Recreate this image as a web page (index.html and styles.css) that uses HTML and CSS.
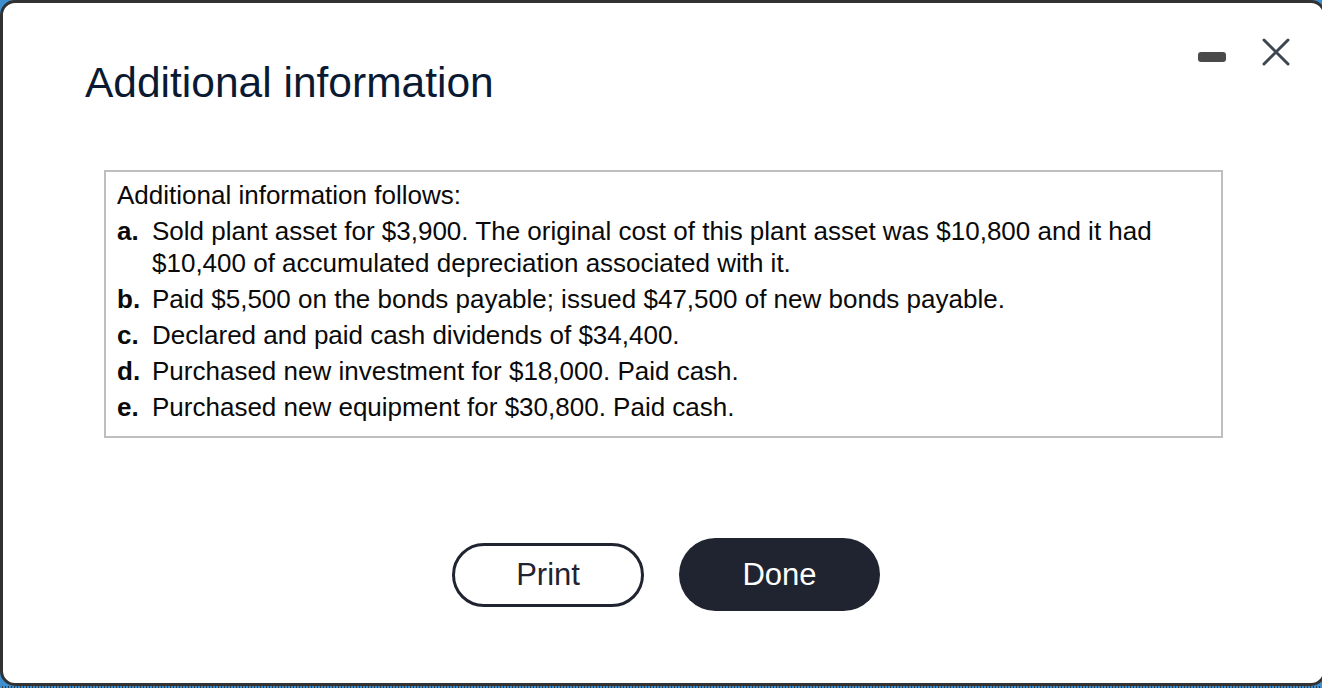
FILE: index.html
```html
<!DOCTYPE html>
<html lang="en">
<head>
<meta charset="utf-8">
<title>Additional information</title>
<link rel="stylesheet" href="styles.css">
</head>
<body>
<div class="window">
  <div class="header">
    <h1 class="title">Additional information</h1>
    <div class="controls">
      <span class="minimize" aria-label="Minimize"></span>
      <svg class="close" width="28" height="28" viewBox="0 0 28 28" aria-label="Close">
        <path d="M2 2 L26 26 M26 2 L2 26" stroke="#3e4651" stroke-width="3" stroke-linecap="round" fill="none"/>
      </svg>
    </div>
  </div>
  <div class="info-box">
    <p class="intro">Additional information follows:</p>
    <ol class="items">
      <li><b class="label">a.</b><span class="text">Sold plant asset for $3,900. The original cost of this plant asset was $10,800 and it had $10,400 of accumulated depreciation associated with it.</span></li>
      <li><b class="label">b.</b><span class="text">Paid $5,500 on the bonds payable; issued $47,500 of new bonds payable.</span></li>
      <li><b class="label">c.</b><span class="text">Declared and paid cash dividends of $34,400.</span></li>
      <li><b class="label">d.</b><span class="text">Purchased new investment for $18,000. Paid cash.</span></li>
      <li><b class="label">e.</b><span class="text">Purchased new equipment for $30,800. Paid cash.</span></li>
    </ol>
  </div>
  <div class="actions">
    <button class="btn btn-outline">Print</button>
    <button class="btn btn-solid">Done</button>
  </div>
</div>
</body>
</html>
```
FILE: styles.css
```css
html, body {
  margin: 0;
  padding: 0;
}
body {
  width: 1322px;
  height: 688px;
  overflow: hidden;
  background:
    repeating-linear-gradient(90deg, #3d8fd0 0 2px, #2f3a44 2px 3px) bottom / 100% 2px no-repeat,
    #3d8fd0;
  font-family: "Liberation Sans", Arial, Helvetica, sans-serif;
}
.window {
  box-sizing: border-box;
  width: 1326px;
  height: 686px;
  border: 3px solid #323232;
  border-radius: 15px;
  background: #fff;
  display: flex;
  flex-direction: column;
}
.header {
  display: flex;
  justify-content: space-between;
  align-items: flex-start;
  padding: 0 33px 0 82px;
}
.title {
  margin: 55px 0 0;
  font-size: 42.5px;
  line-height: 50px;
  font-weight: normal;
  color: #0b1a33;
}
.controls {
  display: flex;
  align-items: flex-start;
  gap: 36px;
  margin-top: 35px;
}
.minimize {
  display: block;
  width: 28px;
  height: 10px;
  margin-top: 14px;
  border-radius: 3px;
  background: #4a4a4a;
}
.close {
  display: block;
}
.info-box {
  box-sizing: border-box;
  width: 1119px;
  margin: 62px 0 0 101px;
  border: 2px solid #bebebe;
  padding: 7px 11px 13px;
  font-size: 26px;
  line-height: 32px;
  color: #0a0a0a;
}
.intro {
  margin: 0 0 4px;
}
.items {
  list-style: none;
  margin: 0;
  padding: 0;
  display: flex;
  flex-direction: column;
  gap: 4px;
}
.items li {
  display: flex;
}
.label {
  flex: 0 0 35px;
  font-weight: bold;
}
.text {
  flex: 1;
}
.actions {
  display: flex;
  justify-content: center;
  align-items: center;
  gap: 35px;
  margin-top: 100px;
  padding-left: 6px;
}
.btn {
  box-sizing: border-box;
  font-family: "Liberation Sans", Arial, Helvetica, sans-serif;
  font-size: 31px;
  border-radius: 40px;
  cursor: pointer;
}
.btn-outline {
  width: 192px;
  height: 64px;
  border: 3px solid #1f2430;
  background: #fff;
  color: #1f2430;
}
.btn-solid {
  width: 201px;
  height: 73px;
  border: none;
  background: #1f2430;
  color: #fff;
}
```
